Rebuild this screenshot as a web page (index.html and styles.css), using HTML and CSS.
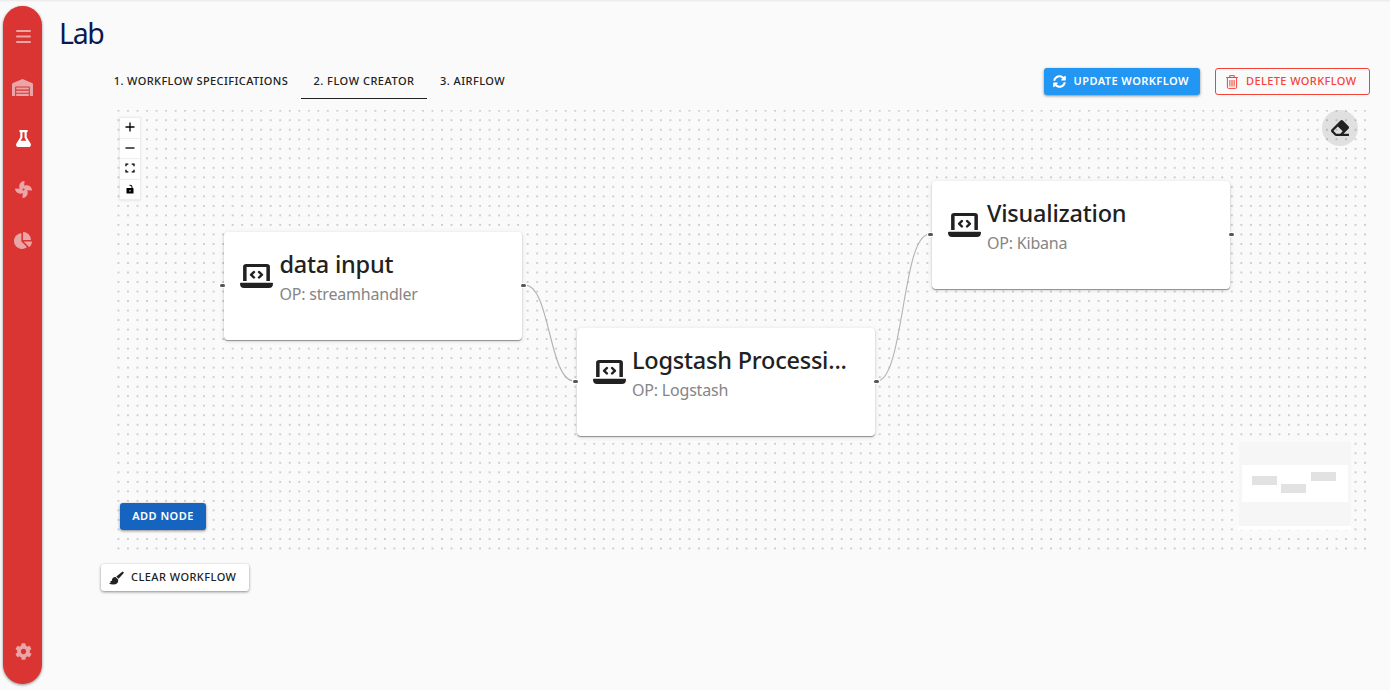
FILE: index.html
```
<!DOCTYPE html>
<html lang="en">
<head>
<meta charset="utf-8">
<title>Lab</title>
<link rel="stylesheet" href="styles.css">
</head>
<body>
<svg class="defs" width="0" height="0">
  <symbol id="laptop" viewBox="0 0 640 512" preserveAspectRatio="none"><path fill-rule="evenodd" d="M60 360V56Q60 0 120 0H520Q580 0 580 56V360H512V64H128V360ZM16 400H624Q640 400 640 416Q640 512 560 512H80Q0 512 0 416Q0 400 16 400Z"/><path fill="none" stroke="currentColor" stroke-width="50" stroke-linecap="round" stroke-linejoin="round" d="M270 172 215 230 270 288M370 172 425 230 370 288"/></symbol>
</svg>
<div class="app">
  <nav class="sidebar">
    <svg class="menu" viewBox="0 0 15 13"><path stroke="currentColor" stroke-width="2" stroke-linecap="round" d="M1 1H14M1 6.500H14M1 12H14"/></svg>
    <svg class="house" viewBox="0 0 640 512"><path d="M504 352H136.400c-4.400 0-8 3.600-8 8l-.1 48c0 4.400 3.600 8 8 8H504c4.400 0 8-3.600 8-8v-48c0-4.400-3.600-8-8-8zm0 96H136.100c-4.400 0-8 3.600-8 8l-.1 48c0 4.400 3.600 8 8 8h368c4.400 0 8-3.600 8-8v-48c0-4.400-3.600-8-8-8zm0-192H136.600c-4.400 0-8 3.600-8 8l-.1 48c0 4.400 3.600 8 8 8H504c4.400 0 8-3.600 8-8v-48c0-4.400-3.600-8-8-8zm106.500-139L338.400 3.700a48.150 48.150 0 0 0-36.900 0L29.500 117C11.700 124.500 0 141.900 0 161.300V504c0 4.400 3.600 8 8 8h80c4.400 0 8-3.600 8-8V256c0-17.600 14.600-32 32.600-32h382.800c18 0 32.600 14.400 32.600 32v248c0 4.400 3.600 8 8 8h80c4.400 0 8-3.600 8-8V161.300c0-19.400-11.700-36.800-29.500-44.300z"/></svg>
    <svg class="flask current" viewBox="0 0 448 512"><path d="M437.200 403.500L320 215V64h8c13.300 0 24-10.700 24-24V24c0-13.300-10.700-24-24-24H120c-13.300 0-24 10.700-24 24v16c0 13.300 10.700 24 24 24h8v151L10.800 403.500C-18.500 450.600 15.300 512 70.900 512h306.200c55.700 0 89.400-61.500 60.100-108.500zM137.900 320l48.200-77.600c3.700-5.200 5.800-11.600 5.800-18.400V64h64v160c0 6.900 2.200 13.200 5.800 18.400l48.200 77.600h-172z"/></svg>
    <svg class="fan" viewBox="0 0 512 512"><path d="M352.570 128c-28.090 0-54.090 4.520-77.060 12.860l12.410-123.110C289 7.310 279.810-1.180 269.330.13 189.630 10.130 128 77.640 128 159.430c0 28.090 4.520 54.090 12.860 77.060L17.750 224.080C7.310 223-1.180 232.190.13 242.670c10 79.700 77.510 141.330 159.300 141.330 28.090 0 54.090-4.520 77.060-12.860l-12.410 123.110c-1.050 10.430 8.110 18.930 18.590 17.620 79.700-10 141.330-77.510 141.330-159.300 0-28.090-4.520-54.090-12.860-77.060l123.110 12.410c10.440 1.050 18.930-8.110 17.620-18.590-10-79.700-77.510-141.330-159.300-141.330zM256 288a32 32 0 1 1 32-32 32 32 0 0 1-32 32z"/></svg>
    <svg class="pie" viewBox="0 0 544 512"><path d="M527.790 288H290.500l158.030 158.030c6.040 6.040 15.980 6.530 22.190.68 38.700-36.460 65.320-85.610 73.130-140.860 1.340-9.460-6.510-17.850-16.060-17.850zm-15.830-64.800C503.720 103.740 408.260 8.280 288.800.04 279.680-.59 272 7.100 272 16.240V240h223.770c9.140 0 16.820-7.680 16.190-16.800zM224 288V50.710c0-9.550-8.390-17.400-17.840-16.060C86.990 51.490-4.100 155.600.14 280.370 4.500 408.510 114.830 513.590 243.030 511.980c50.400-.63 96.970-16.870 135.260-44.030 7.900-5.600 8.420-17.230 1.570-24.080L224 288z"/></svg>
    <svg class="cog" viewBox="0 0 512 512"><path d="M487.400 315.700l-42.600-24.600c4.300-23.200 4.300-47 0-70.200l42.600-24.600c4.900-2.800 7.100-8.600 5.500-14-11.100-35.600-30-67.800-54.700-94.600-3.800-4.100-10-5.100-14.800-2.300L380.800 110c-17.900-15.400-38.500-27.300-60.800-35.100V25.800c0-5.600-3.900-10.500-9.400-11.700-36.700-8.200-74.300-7.800-109.200 0-5.500 1.200-9.400 6.100-9.400 11.700V75c-22.200 7.900-42.800 19.800-60.800 35.100L88.700 85.500c-4.900-2.800-11-1.900-14.800 2.300-24.700 26.700-43.600 58.900-54.700 94.600-1.700 5.400.6 11.200 5.500 14L67.300 221c-4.300 23.200-4.300 47 0 70.200l-42.600 24.600c-4.900 2.800-7.100 8.600-5.500 14 11.100 35.600 30 67.800 54.700 94.600 3.800 4.100 10 5.100 14.800 2.300l42.600-24.600c17.900 15.400 38.500 27.300 60.800 35.100v49.200c0 5.600 3.900 10.500 9.400 11.700 36.700 8.200 74.300 7.800 109.200 0 5.500-1.200 9.400-6.100 9.400-11.700v-49.200c22.200-7.900 42.800-19.800 60.800-35.100l42.600 24.600c4.900 2.800 11 1.900 14.800-2.300 24.700-26.700 43.600-58.900 54.700-94.600 1.500-5.500-.7-11.300-5.600-14.100zM256 336c-44.100 0-80-35.900-80-80s35.900-80 80-80 80 35.900 80 80-35.900 80-80 80z"/></svg>
  </nav>
  <main class="main">
    <h1 class="title">Lab</h1>
    <div class="toolbar">
      <div class="tabs">
        <div class="tab tab-specs"><span>1. WORKFLOW SPECIFICATIONS</span></div>
        <div class="tab tab-flow selected"><span>2. FLOW CREATOR</span></div>
        <div class="tab tab-air"><span>3. AIRFLOW</span></div>
      </div>
      <div class="actions">
        <button class="btn update"><svg viewBox="0 0 512 512"><path d="M370.720 133.280C339.458 104.008 298.888 87.962 255.848 88c-77.458.068-144.328 53.178-162.791 126.850-1.344 5.363-6.122 9.150-11.651 9.150H24.103c-7.498 0-13.194-6.807-11.807-14.176C33.933 94.924 134.813 8 256 8c66.448 0 126.791 26.136 171.315 68.685L463.030 40.970C478.149 25.851 504 36.559 504 57.941V192c0 13.255-10.745 24-24 24H345.941c-21.382 0-32.090-25.851-16.971-40.971l41.750-41.749zM32 296h134.059c21.382 0 32.090 25.851 16.971 40.971l-41.750 41.750c31.262 29.273 71.835 45.319 114.876 45.280 77.418-.07 144.315-53.144 162.787-126.849 1.344-5.363 6.122-9.150 11.651-9.150h57.304c7.498 0 13.194 6.807 11.807 14.176C478.067 417.076 377.187 504 256 504c-66.448 0-126.791-26.136-171.315-68.685L48.970 471.030C33.851 486.149 8 475.441 8 454.059V320c0-13.255 10.745-24 24-24z"/></svg><span>UPDATE WORKFLOW</span></button>
        <button class="btn delete"><svg viewBox="0 0 12 14"><path fill="none" stroke="currentColor" d="M.2 2.500H11.800M3.700 2.300V.6H8.300V2.300M1.400 2.600V12.200Q1.400 13.400 2.600 13.400H9.400Q10.600 13.400 10.600 12.200V2.600"/><path stroke="currentColor" stroke-width=".8" d="M3.700 5V11.500M5.200 5V11.500M6.800 5V11.500M8.300 5V11.500"/></svg><span>DELETE WORKFLOW</span></button>
      </div>
    </div>
    <section class="canvas">
      <svg class="layer" viewBox="0 0 1260 440">
        <defs><pattern id="dots" width="9.516" height="9.516" patternUnits="userSpaceOnUse" x="3.700" y="-4.050"><circle cx="4.758" cy="4.758" r=".7" fill="#8c8c8c"/></pattern></defs>
        <rect width="1260" height="440" fill="url(#dots)"/>
        <path class="edge" d="M415 175C440 175 439 271 464 271"/>
        <path class="edge" d="M767 271C794 271 792 124.500 819 124.500"/>
      </svg>
      <article class="node node-input"><svg><use href="#laptop"/></svg><div class="label"><h2>data input</h2><p>OP: streamhandler</p></div></article>
      <article class="node node-logstash"><svg><use href="#laptop"/></svg><div class="label"><h2>Logstash Processi...</h2><p>OP: Logstash</p></div></article>
      <article class="node node-visual"><svg><use href="#laptop"/></svg><div class="label"><h2>Visualization</h2><p>OP: Kibana</p></div></article>
      <div class="controls">
        <div><svg viewBox="0 0 10 10"><path d="M5 .5V9.500M.5 5H9.500"/></svg></div>
        <div><svg viewBox="0 0 10 10"><path d="M.5 5H9.500"/></svg></div>
        <div><svg viewBox="0 0 10 10"><path d="M1 3.300V1.200H3.300M6.700 1.200H9V3.300M9 6.700V8.800H6.700M3.300 8.800H1V6.700"/></svg></div>
        <div><svg viewBox="0 0 10 10"><path class="solid" fill-rule="evenodd" d="M2 4H6.500V3Q6.500 1.700 5 1.700H4.500V.8H5Q7.500.8 7.500 3V4H8Q8.500 4 8.500 4.500V9Q8.500 9.500 8 9.500H2Q1.500 9.500 1.500 9V4.500Q1.500 4 2 4ZM4.500 6V7.500H5.500V6Z"/></svg></div>
      </div>
      <button class="erase"><svg viewBox="0 0 512 512"><path d="M497.941 273.941c18.745-18.745 18.745-49.137 0-67.882l-160-160c-18.745-18.745-49.136-18.746-67.883 0l-256 256c-18.745 18.745-18.745 49.137 0 67.882l96 96A48.004 48.004 0 0 0 144 480h356c6.627 0 12-5.373 12-12v-40c0-6.627-5.373-12-12-12H355.883l142.058-142.059zm-302.627-62.627l137.373 137.373L265.373 416H150.628l-80-80 124.686-124.686z"/></svg></button>
      <svg class="minimap" viewBox="0 0 113 88"><path fill="#fff" d="M0 84H113V88H0Z"/><path fill="#f6f6f6" d="M1 0H113V84H1Z"/><path fill="#fff" d="M4 23H110V60H4Z"/><path fill="#e2e2e2" d="M14 34H39V43H14ZM43 42H68V51H43ZM73 30H98V39H73Z"/></svg>
      <button class="btn add"><span>ADD NODE</span></button>
    </section>
    <button class="btn clear"><svg viewBox="0 0 16 14"><path d="M14.500 0 16 1.400 10.200 7.700 7.800 5.500ZM7 5.900 9.800 8.600Q10.300 14 4.500 14Q1.500 14 0 12.500L2 11.800 1.200 10.600 3 10Q3 6 7 5.900Z"/></svg><span>CLEAR WORKFLOW</span></button>
  </main>
</div>
</body>
</html>
```
FILE: styles.css
```
* { box-sizing: border-box; }
body { margin: 0; background: #fafafa; color: #212121; font-family: "Noto Sans", "Open Sans", sans-serif; }
svg { display: block; fill: currentColor; flex: none; }
h1, h2, p { margin: 0; }
button { font-family: inherit; border: 0; padding: 0; }
.defs { position: absolute; }
.app { display: flex; width: 1390px; height: 690px; overflow: hidden; box-shadow: inset 0 2px 2px -1px #e8e8e8; }
.sidebar { width: 39px; height: 678px; margin: 6px 0 0 3px; border-radius: 20px; background: #da3433; color: #eca5a7; display: flex; flex-direction: column; align-items: center; padding: 24px 0 24px 2px; box-shadow: 0 1px 3px rgba(0,0,0,.45); }
.menu { width: 15px; height: 13px; margin-bottom: 36px; }
.house { width: 21px; height: 17px; margin: 0 2px 34px 0; }
.flask { width: 15px; height: 17px; margin-bottom: 34px; }
.fan { width: 17px; height: 17px; margin-bottom: 34px; }
.pie { width: 18px; height: 17px; margin-right: 1px; }
.cog { width: 17px; height: 17px; margin-top: auto; }
.current { color: #fff; }
.main { width: 1348px; }
.title { margin: 12px 0 0 17px; height: 42px; line-height: 42px; font-size: 28.500px; font-weight: 400; letter-spacing: -1.300px; color: #0b1952; }
.toolbar { display: flex; justify-content: space-between; margin: 9px 20px 0 59px; height: 36px; }
.tabs { display: flex; }
.tab, .btn { font-size: 11px; font-weight: 500; white-space: nowrap; }
.tab { height: 36px; line-height: 36px; text-align: center; }
.tab-specs { width: 200px; letter-spacing: .39px; }
.tab-flow { width: 126px; letter-spacing: .52px; }
.tab-air { width: 91px; letter-spacing: .45px; }
.selected { border-bottom: 1px solid #212121; }
.actions { display: flex; gap: 15px; padding-top: 5px; }
.btn { height: 27px; border-radius: 3px; display: flex; align-items: center; color: #212121; box-shadow: 0 1px 3px rgba(0,0,0,.45); letter-spacing: .45px; }
.btn span { padding-bottom: 2px; }
.update { width: 156px; background: #2196f3; color: #fff; padding-left: 9px; gap: 7.500px; font-weight: 600; }
.update svg { width: 13px; height: 13px; }
.delete { width: 155px; border: 1px solid #f44336; background: transparent; color: #f44336; box-shadow: none; padding-left: 10px; gap: 8px; letter-spacing: .4px; }
.delete svg { width: 12px; height: 14px; }
.canvas { position: relative; width: 1260px; height: 440px; margin: 11px 0 0 68px; }
.layer { position: absolute; left: 0; top: 0; width: 1260px; height: 440px; }
.edge { fill: none; stroke: #b1b1b7; stroke-width: 1.100; }
.node { position: absolute; width: 298px; height: 108px; background: #fff; border-radius: 4px; display: flex; gap: 6.500px; padding: 15px 0 0 16px; box-shadow: 0 1px 1px rgba(0,0,0,.38), 0 1px 4px rgba(0,0,0,.15); }
.node::before, .node::after { content: ""; position: absolute; top: 51.500px; width: 5px; height: 3px; border-radius: 1.500px; background: #555; box-shadow: 0 0 0 1px #fff; }
.node::before { left: -4px; }
.node::after { right: -4px; }
.node svg { width: 33px; height: 24px; margin-top: 17px; }
.node h2 { font-size: 23.500px; line-height: 34px; font-weight: 500; letter-spacing: -.22px; white-space: nowrap; }
.node p { font-size: 16px; line-height: 24px; padding-top: 1px; font-weight: 400; letter-spacing: -.2px; color: #858585; }
.node-input { left: 114px; top: 122px; }
.node-logstash { left: 466.500px; top: 218px; }
.node-visual { left: 821.500px; top: 71px; }
.controls { position: absolute; left: 10px; top: 8px; width: 20px; box-shadow: 0 0 2px 1px rgba(0,0,0,.08); }
.controls div { height: 20.500px; display: flex; align-items: center; justify-content: center; background: #fefefe; border-bottom: 1px solid #eee; }
.controls svg { width: 10px; height: 10px; margin: -1px 1px 0 0; stroke: #000; stroke-width: 1.300; fill: none; color: #000; }
.controls .solid { fill: #000; stroke: none; }
.erase { position: absolute; left: 1212px; top: 0; width: 36px; height: 36px; border-radius: 50%; background: rgba(0,0,0,.1); color: #212121; display: flex; align-items: center; justify-content: center; }
.erase svg { width: 18px; height: 18px; }
.minimap { position: absolute; left: 1128px; top: 332px; width: 113px; height: 88px; }
.add { position: absolute; left: 10px; top: 393px; width: 86px; justify-content: center; color: #fff; background: #1565c0; font-weight: 600; }
.clear { width: 148px; height: 27px; margin: 14px 0 0 59px; padding-left: 8px; gap: 7px; background: #fff; }
.clear svg { width: 15px; height: 14px; }
```
